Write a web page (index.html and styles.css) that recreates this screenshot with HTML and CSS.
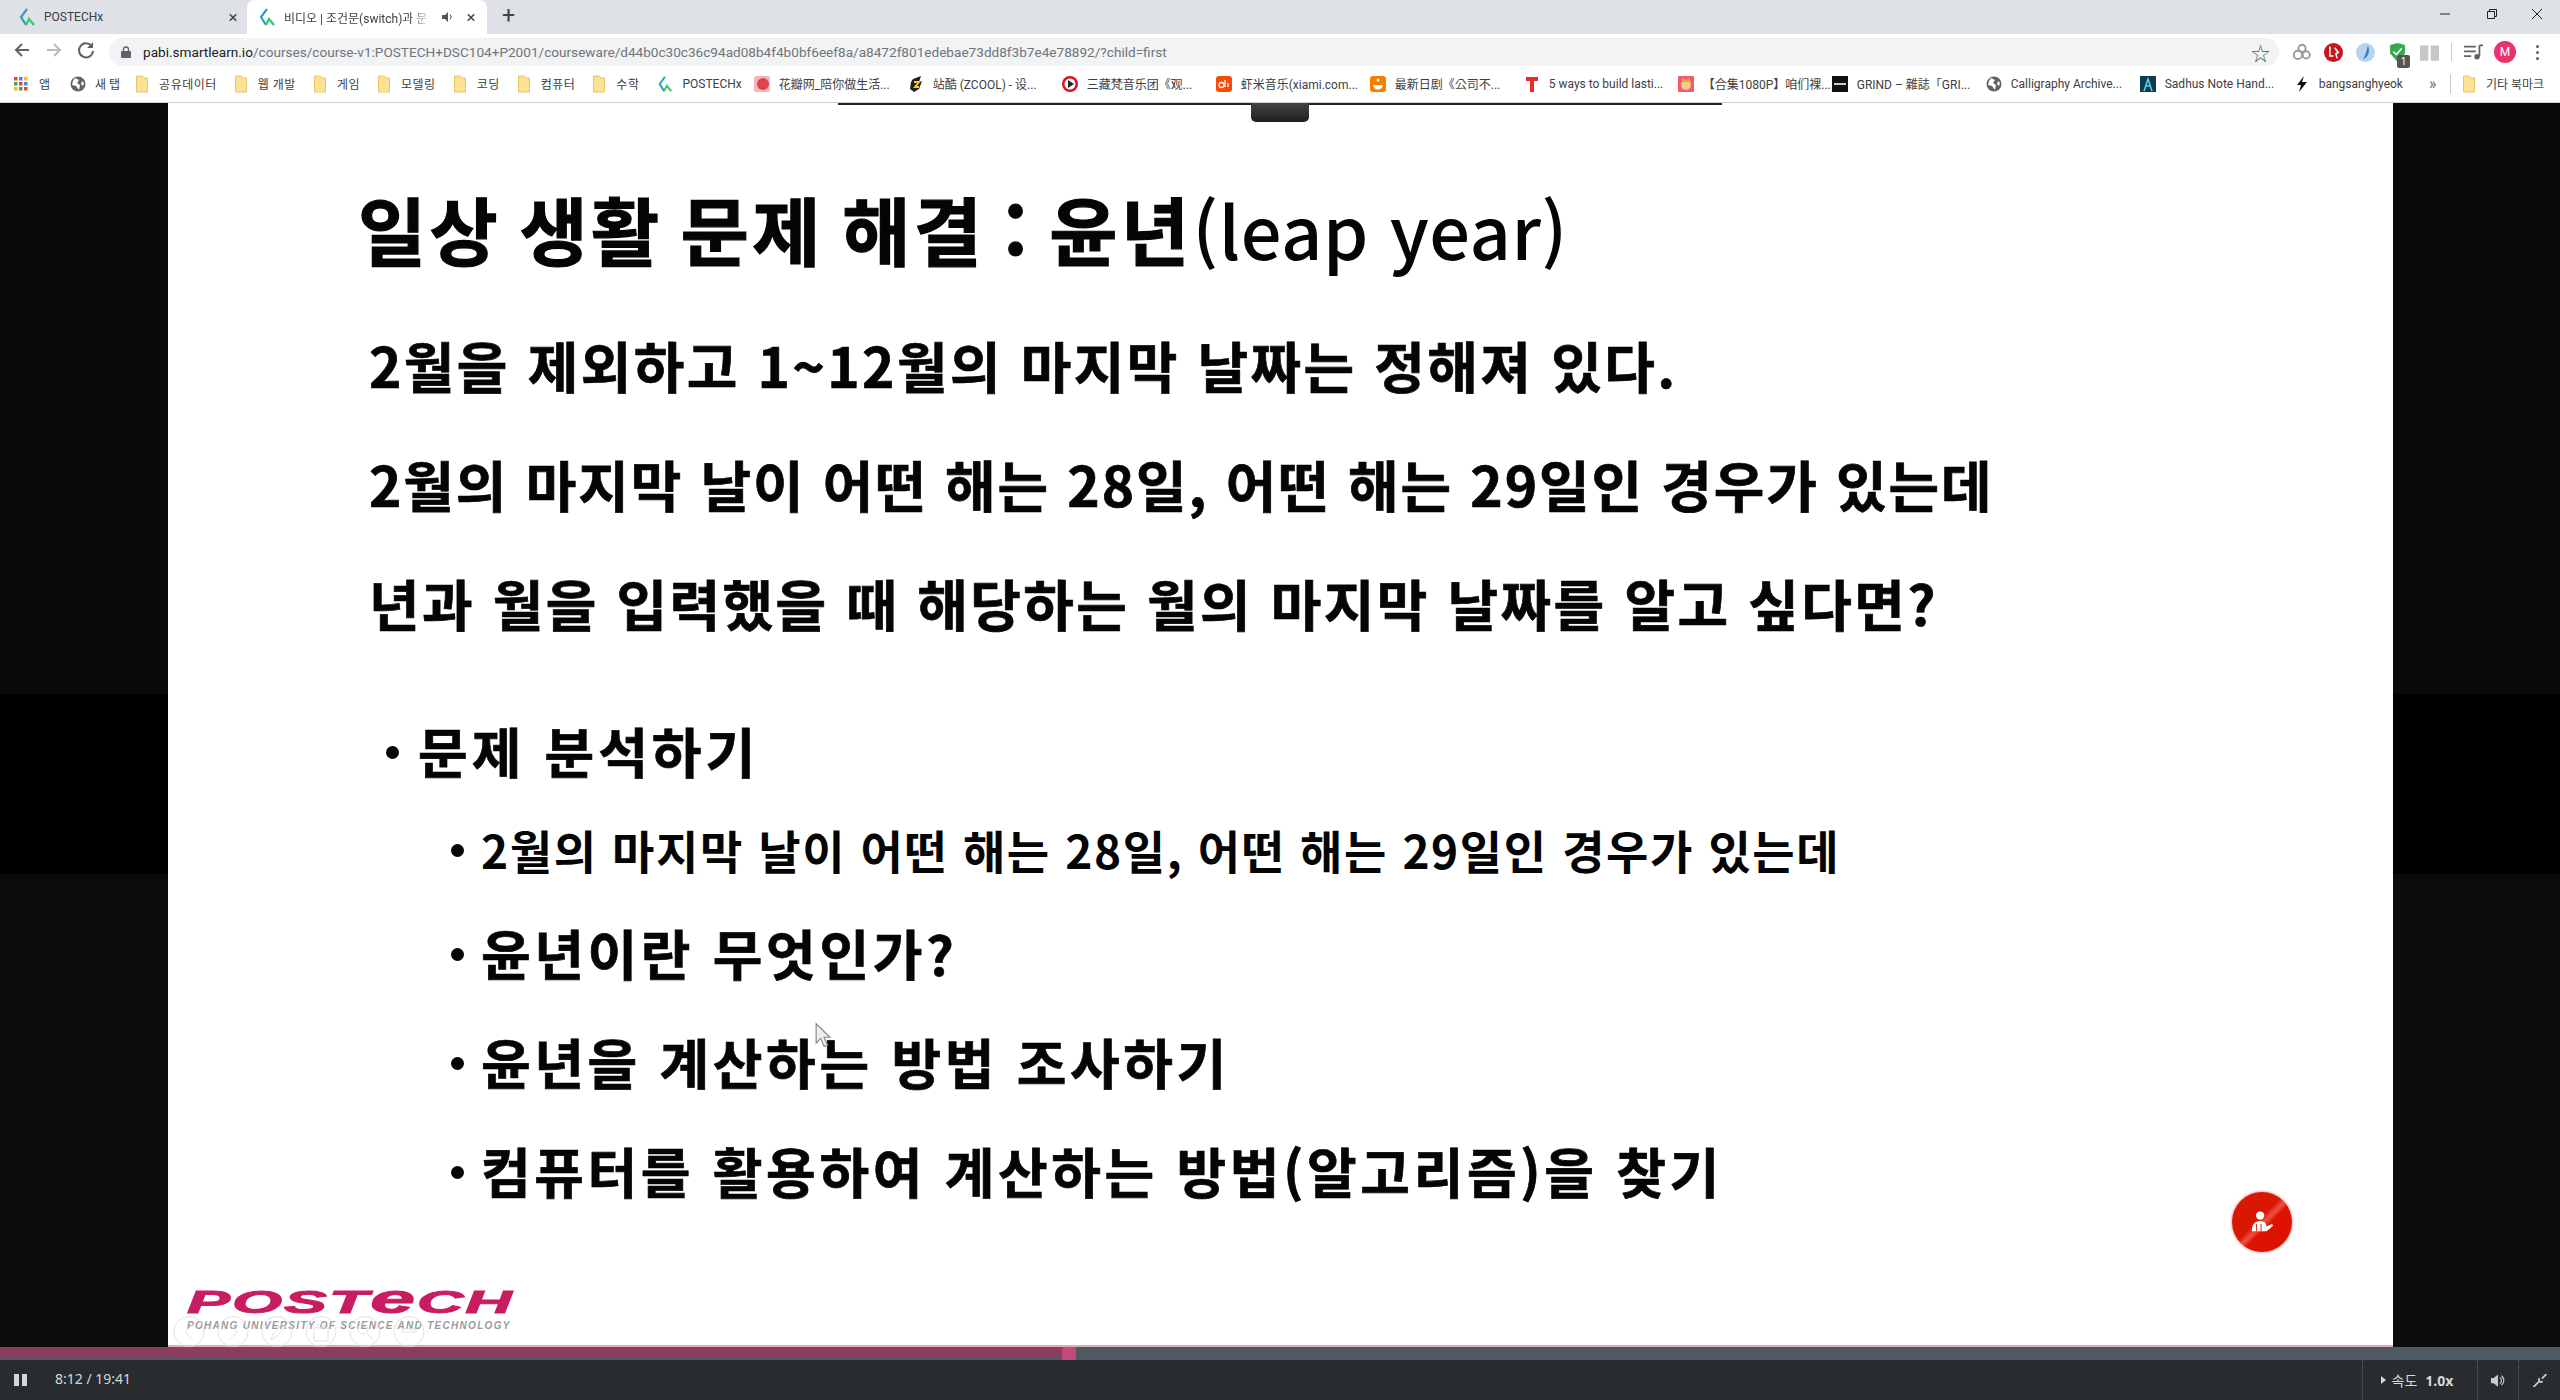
FILE: index.html

```html
<!DOCTYPE html>
<html lang="ko">
<head>
    <meta charset="UTF-8">
    <title>비디오 | 조건문(switch)과 문제 해결</title>
    <link rel="stylesheet" href="styles.css">
</head>
<body>
    <svg class="defs" width="0" height="0">
        <symbol id="favicon" viewBox="0 0 16 18">
            <path d="M8 1 2 9l5 8" fill="none" stroke="#2f9fb5" stroke-width="2.2"/>
            <path d="M7 17l3-6 5 6" fill="none" stroke="#35c46f" stroke-width="2.2"/>
        </symbol>
        <symbol id="folder" viewBox="0 0 12 18">
            <path d="M.5 1h6l1 2h4v14H.5z" fill="#fde293" stroke="#e8c468"/>
        </symbol>
        <symbol id="globe" viewBox="0 0 16 16">
            <circle cx="8" cy="8" r="7.5" fill="#5f6368"/>
            <path d="M5 2l4 2-2 3 3 2-1 5-3-4-4-1 1-4zM12 5l2 2-1 3-2-2z" fill="#fff"/>
        </symbol>
    </svg>

    <div class="tabstrip">
        <div class="tab">
            <svg class="tab-icon"><use href="#favicon"/></svg>
            <span class="tab-title">POSTECHx</span>
            <span class="tab-close">×</span>
        </div>
        <div class="tab tab-active">
            <svg class="tab-icon"><use href="#favicon"/></svg>
            <span class="tab-title tab-fade">비디오 | 조건문(switch)과 문</span>
            <svg class="tab-sound" viewBox="0 0 12 12"><path d="M0 4h3l3-3v10L3 8H0z" fill="#555"/><path d="M8 3.5a3.5 3.5 0 0 1 0 5" fill="none" stroke="#555"/></svg>
            <span class="tab-close">×</span>
        </div>
        <span class="tab-new">+</span>
        <div class="window-btns">
            <svg class="window-btn" viewBox="0 0 46 28"><path d="M18 14h10" stroke="#222"/></svg>
            <svg class="window-btn" viewBox="0 0 46 28"><path d="M19.500 11.500h7v7h-7zM21.500 11V9.500h7v7H27" fill="none" stroke="#222"/></svg>
            <svg class="window-btn" viewBox="0 0 46 28"><path d="M18 9l10 10M28 9 18 19" stroke="#222"/></svg>
        </div>
    </div>

    <div class="toolbar">
        <div class="nav-btns">
            <svg class="nav-btn" viewBox="0 0 32 32"><path d="M23 16H10m6-6-6 6 6 6" fill="none" stroke="#5f6368" stroke-width="2"/></svg>
            <svg class="nav-btn" viewBox="0 0 32 32"><path d="M9 16h13m-6-6 6 6-6 6" fill="none" stroke="#b9bcc0" stroke-width="2"/></svg>
            <svg class="nav-btn" viewBox="0 0 32 32"><path d="M21.500 12a7 7 0 1 0 1.500 5" fill="none" stroke="#5f6368" stroke-width="2"/><path d="M23 8v6h-6z" fill="#5f6368"/></svg>
        </div>
        <div class="omnibox">
            <svg class="lock" viewBox="0 0 10 12"><path d="M2.500 5V3.500a2.500 2.500 0 0 1 5 0V5" fill="none" stroke="#5f6368" stroke-width="1.300"/><rect y="5" width="10" height="7" rx="1" fill="#5f6368"/></svg>
            <span class="url"><b>pabi.smartlearn.io</b>/courses/course-v1:POSTECH+DSC104+P2001/courseware/d44b0c30c36c94ad08b4f4b0bf6eef8a/a8472f801edebae73dd8f3b7e4e78892/?child=first</span>
            <span class="star">☆</span>
        </div>
        <div class="ext-btn"><svg viewBox="0 0 16 16" class="ext-icon"><circle cx="5" cy="10" r="3.500" fill="none" stroke="#999" stroke-width="1.600"/><circle cx="12" cy="10" r="3" fill="none" stroke="#999" stroke-width="1.600"/><circle cx="8.500" cy="4.500" r="3" fill="none" stroke="#999" stroke-width="1.600"/></svg></div>
        <div class="ext-btn"><svg viewBox="0 0 16 16" class="ext-icon"><circle cx="8" cy="8" r="8" fill="#c8141e"/><path d="M5 3v8h3M9 4l3 4-2 1 1 4" fill="none" stroke="#fff" stroke-width="1.300"/></svg></div>
        <div class="ext-btn"><svg viewBox="0 0 16 16" class="ext-icon"><circle cx="8" cy="8" r="8" fill="#b7d3ee"/><path d="M10 2c2 4 1 9-4 12 2-4 3-8 4-12z" fill="#2f7fd0"/></svg></div>
        <div class="ext-btn">
            <svg viewBox="0 0 16 18" class="ext-icon"><path d="M1 2l7-2 7 2v8l-7 8-7-8z" fill="#35a853"/><path d="M4 8l3 3 5-6" fill="none" stroke="#fff" stroke-width="1.500"/></svg>
            <span class="ext-badge">1</span>
        </div>
        <div class="ext-btn"><svg viewBox="0 0 16 16" class="ext-icon"><path d="M0 2h7v13H0zM9 2h7v13H9z" fill="#c4c7c5"/></svg></div>
        <span class="toolbar-sep"></span>
        <div class="ext-btn"><svg viewBox="0 0 16 14" class="ext-icon"><path d="M0 2h10M0 6h10M0 10h6" stroke="#5f6368" stroke-width="1.500"/><path d="M13 1v9" stroke="#5f6368" stroke-width="1.500"/><path d="M13 1h3" stroke="#5f6368" stroke-width="1.500"/><circle cx="11" cy="10.500" r="2.300" fill="#5f6368"/></svg></div>
        <div class="ext-btn"><span class="avatar">M</span></div>
        <div class="ext-btn"><span class="dots"></span></div>
    </div>

    <div class="bookmarks">
        <a class="bm bm-apps">
            <svg class="bm-icon" viewBox="0 0 14 14"><path d="M0 0h3.500v3.500H0z" fill="#ea4335"/><path d="M5 0h3.500v3.500H5z" fill="#4285f4"/><path d="M10 0h3.500v3.500H10z" fill="#fbbc05"/><path d="M0 5h3.500v3.500H0z" fill="#34a853"/><path d="M5 5h3.500v3.500H5z" fill="#ea4335"/><path d="M10 5h3.500v3.500H10z" fill="#4285f4"/><path d="M0 10h3.500v3.500H0z" fill="#fbbc05"/><path d="M5 10h3.500v3.500H5z" fill="#34a853"/><path d="M10 10h3.500v3.500H10z" fill="#ea4335"/></svg>
            앱
        </a>
        <a class="bm bm-newtab"><svg class="bm-icon"><use href="#globe"/></svg>새 탭</a>
        <a class="bm bm-ko"><svg class="bm-folder"><use href="#folder"/></svg>공유데이터</a>
        <a class="bm bm-ko"><svg class="bm-folder"><use href="#folder"/></svg>웹 개발</a>
        <a class="bm bm-ko"><svg class="bm-folder"><use href="#folder"/></svg>게임</a>
        <a class="bm bm-ko"><svg class="bm-folder"><use href="#folder"/></svg>모델링</a>
        <a class="bm bm-ko"><svg class="bm-folder"><use href="#folder"/></svg>코딩</a>
        <a class="bm bm-ko"><svg class="bm-folder"><use href="#folder"/></svg>컴퓨터</a>
        <a class="bm bm-ko"><svg class="bm-folder"><use href="#folder"/></svg>수학</a>
        <a class="bm bm-postech"><svg class="bm-icon"><use href="#favicon"/></svg>POSTECHx</a>
        <a class="bm bm-long"><svg class="bm-icon" viewBox="0 0 16 16"><rect width="16" height="16" rx="2" fill="#f3b7b7"/><circle cx="9" cy="8" r="6" fill="#e0434b"/></svg>花瓣网_陪你做生活...</a>
        <a class="bm bm-long"><svg class="bm-icon" viewBox="0 0 16 16"><path d="M5 3l8-3-2 6 3-1-3 8-5 3-4-3 1-7z" fill="#222"/><path d="M6 6h5L7 11h4" fill="none" stroke="#fc3" stroke-width="1.800"/></svg>站酷 (ZCOOL) - 设...</a>
        <a class="bm bm-long"><svg class="bm-icon" viewBox="0 0 16 16"><circle cx="8" cy="8" r="8" fill="#d9121f"/><circle cx="8" cy="8" r="5.500" fill="#fff"/><path d="M6 4l6 4-6 4z" fill="#222"/></svg>三藏梵音乐团《观...</a>
        <a class="bm bm-long"><svg class="bm-icon" viewBox="0 0 16 16"><rect width="16" height="16" rx="3" fill="#fa4a07"/><circle cx="5.500" cy="9" r="2.500" fill="none" stroke="#fff" stroke-width="1.300"/><path d="M9 4v7M12 7v4" stroke="#fff" stroke-width="1.300"/></svg>虾米音乐(xiami.com...</a>
        <a class="bm bm-long"><svg class="bm-icon" viewBox="0 0 16 16"><rect width="16" height="16" rx="3" fill="#f77f00"/><path d="M3 9c1 6 9 6 10 0z" fill="#fff"/><circle cx="8" cy="4" r="1.500" fill="#fff"/></svg>最新日剧《公司不...</a>
        <a class="bm bm-long"><svg class="bm-icon" viewBox="0 0 16 16"><path d="M2 1h12v4h-4v11H6V5H2z" fill="#e62b2b"/></svg>5 ways to build lasti...</a>
        <a class="bm bm-long"><svg class="bm-icon" viewBox="0 0 16 16"><rect width="16" height="16" rx="1" fill="#ef5c6e"/><circle cx="8" cy="9" r="5" fill="#f7c98b"/><path d="M3 6l2-4 3 2 3-2 2 4z" fill="#e6a23c"/></svg>【合集1080P】咱们裸...</a>
        <a class="bm bm-long"><svg class="bm-icon" viewBox="0 0 16 16"><rect width="16" height="16" fill="#111"/><path d="M2 7h12v2H2z" fill="#ccc"/></svg>GRIND – 雜誌「GRI...</a>
        <a class="bm bm-long"><svg class="bm-icon"><use href="#globe"/></svg>Calligraphy Archive...</a>
        <a class="bm bm-long"><svg class="bm-icon" viewBox="0 0 16 16"><rect width="16" height="16" fill="#0b3d4f"/><path d="M4 15 8 3l4 12M6 10h4" fill="none" stroke="#5fd0e8" stroke-width="1.500"/></svg>Sadhus Note Hand...</a>
        <a class="bm bm-bolt"><svg class="bm-icon" viewBox="0 0 14 16"><path d="M9 0 2 9h4l-2 7 8-10H7z" fill="#111"/></svg>bangsanghyeok</a>
        <span class="bm-more">»</span>
        <span class="bm-sep"></span>
        <a class="bm bm-other"><svg class="bm-folder"><use href="#folder"/></svg>기타 북마크</a>
    </div>

    <main class="player">
        <section class="slide">
            <span class="slide-topline"></span>
            <span class="slide-notch"></span>
            <h1 class="slide-title">일상 생활 문제 해결 : 윤년<span class="slide-latin">(leap year)</span></h1>
            <p class="lead lead-first">2월을 제외하고 1~12월의 마지막 날짜는 정해져 있다.</p>
            <p class="lead lead-tight">2월의 마지막 날이 어떤 해는 28일, 어떤 해는 29일인 경우가 있는데</p>
            <p class="lead">년과 월을 입력했을 때 해당하는 월의 마지막 날짜를 알고 싶다면?</p>
            <ul class="outline">
                <li class="outline-head">문제 분석하기</li>
                <li class="outline-item outline-small">2월의 마지막 날이 어떤 해는 28일, 어떤 해는 29일인 경우가 있는데</li>
                <li class="outline-item">윤년이란 무엇인가?</li>
                <li class="outline-item">윤년을 계산하는 방법 조사하기</li>
                <li class="outline-item">컴퓨터를 활용하여 계산하는 방법(알고리즘)을 찾기</li>
            </ul>
            <svg class="cursor" viewBox="0 0 14 22"><path d="M1 1v17l4-4 3 7 3-1-3-7h5z" fill="#eee" stroke="#888"/></svg>
            <div class="logo">
                <div class="logo-name">POST<span class="logo-e">e</span>CH</div>
                <div class="logo-sub">POHANG UNIVERSITY OF SCIENCE AND TECHNOLOGY</div>
            </div>
            <svg class="ghost-tools" viewBox="0 0 253 31" fill="none" stroke="#e2e2e2">
                <circle cx="16" cy="15.500" r="15"/><path d="M20 8l-8 8 8 8"/>
                <circle cx="60" cy="15.500" r="15"/><path d="M56 8l8 8-8 8"/>
                <circle cx="104" cy="15.500" r="15"/><path d="M98 24l2-6 9-10 3 3-9 10z"/>
                <circle cx="148" cy="15.500" r="15"/><path d="M141 12h14v13h-14zM145 12V8h6v4"/>
                <circle cx="192" cy="15.500" r="15"/><circle cx="190" cy="13" r="5"/><path d="M194 17l6 7"/>
                <circle cx="236" cy="15.500" r="15"/><path d="M229 13h14v3h-14z"/>
            </svg>
            <div class="presenter">
                <svg class="presenter-icon" viewBox="0 0 26 24"><circle cx="11" cy="5" r="4.500" fill="#fff"/><path d="M2 22c0-7 3-11 9-11 3 0 5 1 6 3l1 3 6-3 1 2-7 6z" fill="#fff"/><path d="M7 14v8M12 14v8" stroke="#d81800"/></svg>
            </div>
        </section>
    </main>

    <div class="progress"><div class="progress-played"></div><span class="progress-handle"></span></div>

    <footer class="controls">
        <span class="pause"></span>
        <span class="time">8:12 / 19:41</span>
        <div class="ctl ctl-speed"><span class="speed-arrow"></span>속도 <b>1.0x</b></div>
        <div class="ctl ctl-volume">
            <svg class="ctl-icon" viewBox="0 0 16 14"><path d="M0 4h3l5-4v14l-5-4H0z" fill="#c8ccce"/><path d="M10 3.500a4 4 0 0 1 0 7M12 1.500a7 7 0 0 1 0 11" fill="none" stroke="#c8ccce" stroke-width="1.300"/></svg>
        </div>
        <div class="ctl ctl-full">
            <svg class="ctl-icon" viewBox="0 0 14 14"><path d="M14 0 9 5m-3-.500V8.500h4M0 14l5-5" fill="none" stroke="#c8ccce" stroke-width="2"/></svg>
        </div>
    </footer>
</body>
</html>
```

FILE: styles.css

```css
* {
    box-sizing: border-box;
}
html, body {
    margin: 0;
    padding: 0;
    height: 1400px;
    overflow: hidden;
}
body {
    display: flex;
    flex-direction: column;
    font-family: Roboto, "Noto Sans CJK KR", sans-serif;
    background: #0a0a0a;
}
.defs {
    position: absolute;
}

/* browser tabs */
.tabstrip {
    height: 34px;
    flex: none;
    display: flex;
    align-items: stretch;
    padding-left: 8px;
    background: #dee1e6;
    color: #3c4043;
    font-size: 12px;
}
.tab {
    width: 239px;
    display: flex;
    align-items: center;
    padding: 0 6px 0 11px;
}
.tab-active {
    width: 240px;
    padding: 0 8px 0 12px;
    background: #fff;
    border-radius: 8px 8px 0 0;
}
.tab-icon {
    width: 16px;
    height: 18px;
    flex: none;
    margin-right: 9px;
}
.tab-title {
    flex: 1;
    overflow: hidden;
    white-space: nowrap;
}
.tab-fade {
    -webkit-mask-image: linear-gradient(to right, #000 85%, transparent);
    mask-image: linear-gradient(to right, #000 85%, transparent);
}
.tab-sound {
    width: 12px;
    height: 12px;
    margin: 0 9px 0 10px;
}
.tab-close {
    width: 16px;
    font-size: 17px;
    line-height: 16px;
    text-align: center;
    color: #444;
}
.tab-new {
    margin-left: 15px;
    font-size: 23px;
    line-height: 32px;
    color: #444;
}
.window-btns {
    margin-left: auto;
    display: flex;
}
.window-btn {
    width: 46px;
    height: 28px;
}

/* address bar */
.toolbar {
    height: 32px;
    flex: none;
    display: flex;
    align-items: flex-end;
    padding: 0 6px;
    background: #fff;
}
.nav-btns {
    display: flex;
    align-self: flex-end;
    margin-right: 7px;
}
.nav-btn {
    width: 32px;
    height: 32px;
    display: block;
}
.omnibox {
    width: 2170px;
    height: 28px;
    display: flex;
    align-items: center;
    padding: 0 9px 0 12px;
    border-radius: 14px;
    background: #f1f3f4;
    font-size: 13.6px;
    color: #70757a;
    margin-right: 6px;
}
.lock {
    width: 10px;
    height: 12px;
    margin-right: 12px;
}
.url {
    white-space: nowrap;
}
.url b {
    font-weight: 400;
    color: #202124;
}
.star {
    margin-left: auto;
    font-size: 19px;
    color: #5f6368;
}
.ext-btn {
    position: relative;
    width: 32px;
    height: 28px;
    display: flex;
    align-items: center;
    justify-content: center;
}
.ext-icon {
    width: 19px;
    height: 19px;
}
.ext-badge {
    position: absolute;
    left: 16px;
    top: 17px;
    width: 13px;
    height: 13px;
    border-radius: 2px;
    background: #555;
    color: #fff;
    font-size: 10px;
    line-height: 13px;
    text-align: center;
}
.toolbar-sep {
    width: 1px;
    height: 18px;
    margin: 0 5px 5px 6px;
    background: #c8cacd;
}
.avatar {
    width: 22px;
    height: 22px;
    border-radius: 50%;
    background: #e8336d;
    color: #fff;
    font-size: 12px;
    line-height: 22px;
    text-align: center;
}
.dots {
    width: 3px;
    height: 3px;
    border-radius: 50%;
    background: #5f6368;
    box-shadow: 0 -6px 0 #5f6368, 0 6px 0 #5f6368;
}

/* bookmark bar */
.bookmarks {
    height: 37px;
    flex: none;
    display: flex;
    align-items: center;
    padding: 0 0 1px 14px;
    background: #fff;
    border-bottom: 1px solid #d0d2d5;
    color: #3c4043;
    font-size: 12px;
    white-space: nowrap;
}
.bm {
    flex: none;
    display: flex;
    align-items: center;
    margin-right: 18px;
}
.bm-ko {
    letter-spacing: 0.5px;
}
.bm-icon {
    width: 16px;
    height: 16px;
    margin-right: 9px;
    flex: none;
}
.bm-folder {
    width: 12px;
    height: 18px;
    margin-right: 11px;
    flex: none;
}
.bm-long {
    width: 154px;
    margin-right: 0;
    overflow: hidden;
}
.bm-apps .bm-icon {
    width: 14px;
    height: 14px;
    margin-right: 11px;
}
.bm-apps {
    margin-right: 20px;
}
.bm-newtab {
    margin-right: 16px;
}
.bm-postech {
    margin-right: 12px;
}
.bm-bolt {
    margin-right: 26px;
}
.bm-more {
    width: 10px;
    margin-right: 11px;
    font-size: 16px;
    color: #5f6368;
}
.bm-sep {
    width: 1px;
    height: 20px;
    margin-right: 12px;
    background: #c8cacd;
}
.bm-other {
    margin-right: 0;
}

/* video area */
.player {
    height: 1244px;
    flex: none;
    display: flex;
    justify-content: center;
    background: linear-gradient(to bottom, #0a0a0a 591px, #000 591px, #000 771px, #0b0b0b 771px);
}
.slide {
    position: relative;
    width: 2225px;
    margin-left: 1px;
    background: #fff;
    color: #050505;
    font-family: "Noto Sans CJK KR", sans-serif;
    font-weight: 700;
    white-space: nowrap;
    padding: 85px 0 0 190px;
    border-bottom: 2px solid #e3a9bd;
}
.slide-topline {
    position: absolute;
    left: 670px;
    top: 0;
    width: 884px;
    height: 2px;
    background: #222;
}
.slide-notch {
    position: absolute;
    left: 1083px;
    top: 0;
    width: 58px;
    height: 19px;
    border-radius: 0 0 5px 5px;
    background: linear-gradient(to bottom, #444, #1f1f1f);
}
.slide-title {
    margin: 0;
    font-size: 74px;
    line-height: 80px;
    font-weight: 700;
    letter-spacing: 3.5px;
    word-spacing: -6px;
    -webkit-text-stroke: 1.2px #050505;
}
.slide-latin {
    font-size: 72px;
    font-weight: 500;
    letter-spacing: 0.6px;
    word-spacing: 0;
    -webkit-text-stroke: 0;
}
.lead {
    margin: 49px 0 0 11px;
    font-size: 55px;
    line-height: 70px;
    letter-spacing: 2.4px;
    -webkit-text-stroke: 0.7px #050505;
}
.lead-first {
    margin-top: 60px;
}
.lead-tight {
    letter-spacing: 1.9px;
}
.outline {
    margin: 79px 0 0;
    padding: 0;
    list-style: none;
}
.outline-head {
    position: relative;
    margin-left: 60px;
    font-size: 54px;
    line-height: 70px;
    letter-spacing: 4px;
    -webkit-text-stroke: 0.7px #050505;
}
.outline-item {
    position: relative;
    margin: 39px 0 0 123px;
    font-size: 54px;
    line-height: 70px;
    letter-spacing: 3.6px;
    -webkit-text-stroke: 0.7px #050505;
}
.outline-small {
    margin-top: 33px;
    font-size: 46px;
    font-weight: 700;
    line-height: 60px;
    letter-spacing: 1.6px;
    -webkit-text-stroke: 0;
}
.outline-head::before,
.outline-item::before {
    content: "";
    position: absolute;
    left: -32px;
    top: 50%;
    width: 13px;
    height: 13px;
    margin-top: -5px;
    border-radius: 50%;
    background: #050505;
}
.outline-item::before {
    left: -30px;
}
.cursor {
    position: absolute;
    left: 647px;
    top: 919px;
    width: 16px;
    height: 26px;
}
.logo {
    position: absolute;
    left: 19px;
    top: 1186px;
    font-family: "Liberation Sans", sans-serif;
    font-style: italic;
}
.logo-name {
    font-size: 32px;
    line-height: 24px;
    font-weight: 700;
    color: #c81d62;
    letter-spacing: 1px;
    -webkit-text-stroke: 1px #c81d62;
    transform: scaleX(2.01);
    transform-origin: left;
}
.logo-e {
    font-size: 40px;
    line-height: 20px;
}
.logo-sub {
    margin-top: 6px;
    font-size: 10px;
    line-height: 11px;
    font-weight: 700;
    letter-spacing: 1.3px;
    color: #9a9a9a;
}
.ghost-tools {
    position: absolute;
    left: 5px;
    top: 1213px;
    width: 253px;
    height: 31px;
}
.presenter {
    position: absolute;
    left: 2064px;
    top: 1089px;
    width: 60px;
    height: 60px;
    display: flex;
    align-items: center;
    justify-content: center;
    border-radius: 50%;
    background: linear-gradient(135deg, #d81800 45%, #f0504a 52%, #dd1300 58%);
    box-shadow: 0 0 3px rgba(150, 0, 0, 0.6);
}
.presenter-icon {
    width: 24px;
    height: 24px;
}

/* progress and player controls */
.progress {
    position: relative;
    height: 13px;
    flex: none;
    background: #4f5a60;
}
.progress-played {
    width: 1069px;
    height: 11px;
    background: #8b3d5f;
}
.progress-handle {
    position: absolute;
    left: 1062px;
    top: 0;
    width: 14px;
    height: 13px;
    background: #c5487a;
    border-radius: 2px;
}
.controls {
    height: 40px;
    flex: none;
    display: flex;
    align-items: stretch;
    background: #282c2f;
    color: #d5d8da;
    font-family: "Noto Sans", "Noto Sans CJK KR", sans-serif;
    font-size: 14px;
}
.pause {
    width: 13px;
    height: 12px;
    margin: 14px 28px 0 14px;
    border-left: 5px solid #d5d8da;
    border-right: 5px solid #d5d8da;
}
.time {
    line-height: 38px;
}
.ctl {
    display: flex;
    align-items: center;
    justify-content: center;
    border-left: 1px dotted #5b6266;
}
.ctl-speed {
    width: 115px;
    margin-left: auto;
    padding-right: 6px;
    gap: 6px;
}
.ctl-speed b {
    font-weight: 700;
    margin-left: 2px;
}
.speed-arrow {
    border-left: 5px solid #d5d8da;
    border-top: 4px solid transparent;
    border-bottom: 4px solid transparent;
}
.ctl-volume {
    width: 41px;
}
.ctl-full {
    width: 42px;
}
.ctl-icon {
    width: 14px;
    height: 13px;
}
```
